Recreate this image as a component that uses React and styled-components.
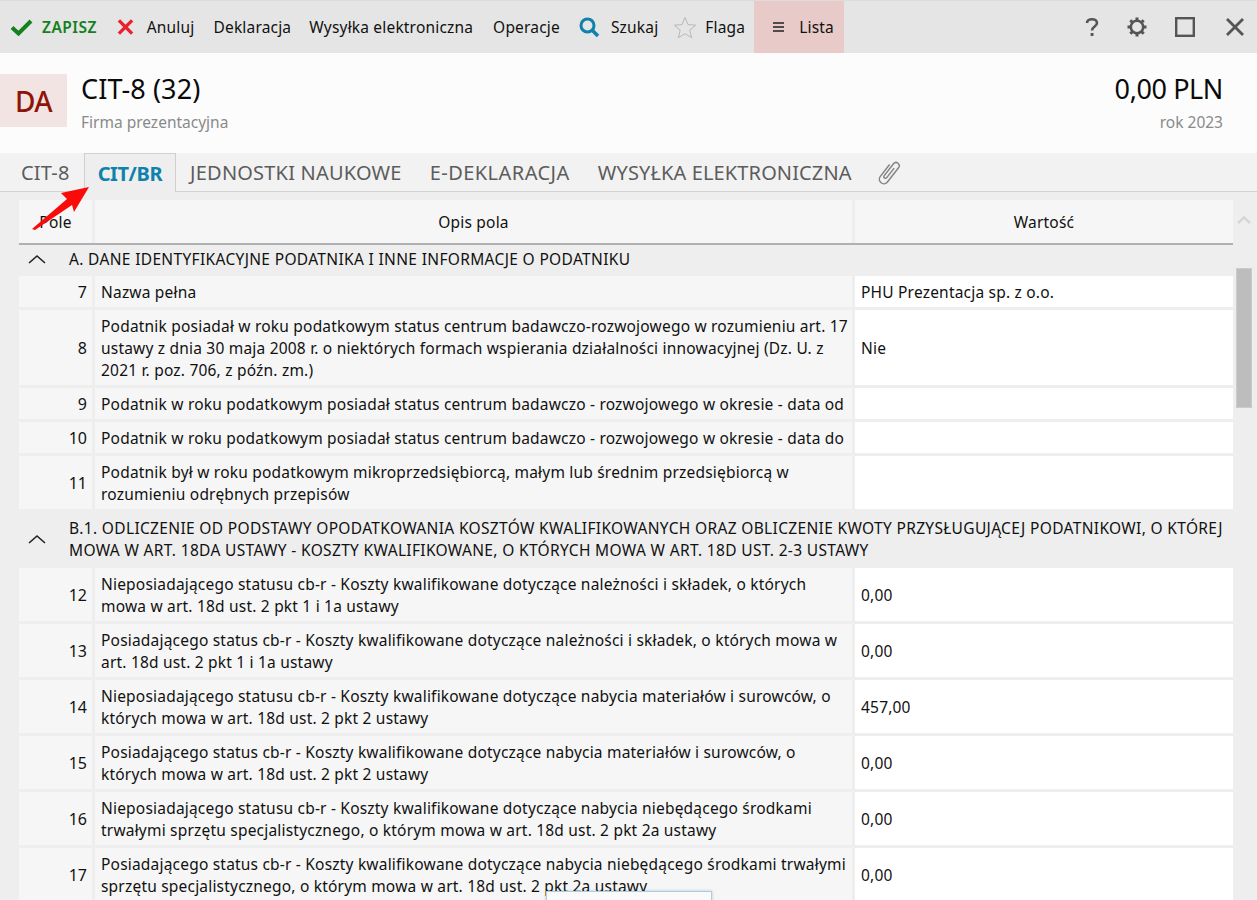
import React from 'react';
import styled, { createGlobalStyle } from 'styled-components';

const Global = createGlobalStyle`
    html, body { margin: 0; padding: 0; background: #eeeeee; }
    body { font-family: "Noto Sans", "Open Sans", "Liberation Sans", sans-serif; color: #111; }
`;

const Page = styled.div`
    position: relative;
    width: 1257px;
    height: 900px;
    overflow: hidden;
    display: flex;
    flex-direction: column;
    background: #eeeeee;
`;

const Toolbar = styled.div`
    height: 53px;
    flex: none;
    box-sizing: border-box;
    border-top: 1px solid #dcdcdc;
    background: #e5e5e5;
    display: flex;
    align-items: stretch;
    padding-left: 10px;
    font-size: 15.5px;
    letter-spacing: 0.18px;
`;

const ToolItem = styled.div`
    display: flex;
    align-items: center;
    gap: ${props => props.$gap || 0}px;
    margin-right: ${props => props.$mr || 0}px;
    color: ${props => props.$color || '#111'};
    font-weight: ${props => props.$bold ? 600 : 400};
    letter-spacing: ${props => props.$bold ? '0.45px' : 'inherit'};
    white-space: nowrap;
    flex: none;
`;

const ListaItem = styled(ToolItem)`
    background: #e8cbc8;
    width: 90px;
    box-sizing: border-box;
    padding-left: 19px;
    gap: 15px;
`;

const WindowButtons = styled.div`
    margin-left: auto;
    display: flex;
    align-items: center;
    padding-right: 12px;
`;

const Header = styled.div`
    height: 100px;
    flex: none;
    background: #fcfcfc;
    display: flex;
    align-items: flex-start;
    padding-top: 21px;
    box-sizing: border-box;
`;

const Badge = styled.div`
    width: 67px;
    height: 53px;
    background: #f2e4e2;
    color: #8f1408;
    font-size: 28px;
    font-weight: 500;
    display: flex;
    align-items: center;
    justify-content: center;
    letter-spacing: -0.5px;
    flex: none;
`;

const TitleBlock = styled.div`
    margin-left: 14px;
    flex: 1;
    margin-top: -2px;
`;

const Title = styled.div`
    font-size: 27px;
    line-height: 34px;
    letter-spacing: ${props => props.$ls || '0.1px'};
    color: #0a0a0a;
`;

const Sub = styled.div`
    font-size: 15.5px;
    line-height: 24px;
    margin-top: 4px;
    color: #8a8a8a;
`;

const Amount = styled.div`
    text-align: right;
    padding-right: 34px;
    margin-top: -2px;
`;

const Tabs = styled.div`
    height: 39px;
    flex: none;
    box-sizing: border-box;
    background: #f2f2f2;
    border-bottom: 1px solid #d2d2d2;
    display: flex;
    align-items: stretch;
    padding-left: 7px;
    font-size: 20px;
    color: #5c5c5c;
`;

const Tab = styled.div`
    display: flex;
    align-items: center;
    padding: 0 14px;
    white-space: nowrap;
    letter-spacing: ${props => props.$ls || '0.2px'};
    box-sizing: border-box;
    height: ${props => props.$active ? '39px' : '38px'};
    ${props => props.$active && `
        background: #eeeeee;
        color: #0e81ad;
        font-weight: 700;
        border: 1px solid #cfcfcf;
        border-bottom: none;
        padding: 0 13px;
        letter-spacing: -0.4px;
    `}
`;

const Clip = styled.div`
    display: flex;
    align-items: center;
    margin-left: 11px;
`;

const Body = styled.div`
    flex: 1;
    display: flex;
    min-height: 0;
    padding-left: 19px;
    padding-top: 8px;
`;

const Table = styled.div`
    width: 1214px;
    flex: none;
    font-size: 15.5px;
    letter-spacing: 0.2px;
`;

const HeadRow = styled.div`
    display: grid;
    grid-template-columns: 73px 757px 378px;
    column-gap: 3px;
    height: 45px;
    border-bottom: 2px solid #b0b0b0;
    box-sizing: border-box;
`;

const HeadCell = styled.div`
    background: #f6f6f6;
    display: flex;
    align-items: center;
    justify-content: center;
    height: 43px;
`;

const Section = styled.div`
    display: flex;
    align-items: center;
    box-sizing: border-box;
    height: ${props => props.$h}px;
    padding-bottom: ${props => props.$pb || 0}px;
    line-height: 22px;
    background: #eeeeee;
`;

const Chevron = styled.div`
    width: 50px;
    flex: none;
    display: flex;
    justify-content: center;
    padding-right: 14px;
    box-sizing: border-box;
`;

const SectionText = styled.div`
    white-space: nowrap;
    letter-spacing: 0.34px;
`;

const Row = styled.div`
    display: grid;
    grid-template-columns: 73px 757px 378px;
    column-gap: 3px;
    height: ${props => props.$h}px;
    margin-bottom: ${props => props.$last ? 0 : 3}px;
    line-height: 22px;
`;

const NoCell = styled.div`
    background: #f6f6f6;
    display: flex;
    align-items: center;
    justify-content: flex-end;
    padding-right: 5px;
    font-size: 16px;
    letter-spacing: 0;
`;

const LabelCell = styled.div`
    background: #f6f6f6;
    display: flex;
    flex-direction: column;
    justify-content: center;
    padding-left: 6px;
    white-space: nowrap;
`;

const ValueCell = styled.div`
    background: #ffffff;
    display: flex;
    align-items: center;
    padding-left: 6px;
`;

const Scrollbar = styled.div`
    width: 18px;
    margin-left: 2px;
    flex: none;
    display: flex;
    flex-direction: column;
    align-items: center;
`;

const ScrollArrow = styled.div`
    height: 68px;
    flex: none;
    padding-top: 8px;
    box-sizing: border-box;
`;

const ScrollThumb = styled.div`
    width: 16px;
    height: 140px;
    box-sizing: border-box;
    background: #bdbdbd;
    border: 1px solid #cbcbcb;
    flex: none;
`;

const RedArrow = styled.svg`
    position: absolute;
    left: 28px;
    top: 180px;
`;

const Popup = styled.div`
    position: absolute;
    left: 546px;
    top: 891px;
    width: 166px;
    height: 20px;
    box-sizing: border-box;
    background: #fafafa;
    border: 1px solid #a9cfe8;
    box-shadow: 0 0 3px rgba(0, 0, 0, 0.2);
`;

const rows = [
    { no: 7, h: 31, lines: ['Nazwa pełna'], value: 'PHU Prezentacja sp. z o.o.' },
    { no: 8, h: 75, lines: ['Podatnik posiadał w roku podatkowym status centrum badawczo-rozwojowego w rozumieniu art. 17', 'ustawy z dnia 30 maja 2008 r. o niektórych formach wspierania działalności innowacyjnej (Dz. U. z', '2021 r. poz. 706, z późn. zm.)'], value: 'Nie' },
    { no: 9, h: 31, lines: ['Podatnik w roku podatkowym posiadał status centrum badawczo - rozwojowego w okresie - data od'] },
    { no: 10, h: 31, lines: ['Podatnik w roku podatkowym posiadał status centrum badawczo - rozwojowego w okresie - data do'] },
    { no: 11, h: 53, lines: ['Podatnik był w roku podatkowym mikroprzedsiębiorcą, małym lub średnim przedsiębiorcą w', 'rozumieniu odrębnych przepisów'], last: true },
];

const rowsB = [
    { no: 12, lines: ['Nieposiadającego statusu cb-r - Koszty kwalifikowane dotyczące należności i składek, o których', 'mowa w art. 18d ust. 2 pkt 1 i 1a ustawy'], value: '0,00' },
    { no: 13, lines: ['Posiadającego status cb-r - Koszty kwalifikowane dotyczące należności i składek, o których mowa w', 'art. 18d ust. 2 pkt 1 i 1a ustawy'], value: '0,00' },
    { no: 14, lines: ['Nieposiadającego statusu cb-r - Koszty kwalifikowane dotyczące nabycia materiałów i surowców, o', 'których mowa w art. 18d ust. 2 pkt 2 ustawy'], value: '457,00' },
    { no: 15, lines: ['Posiadającego status cb-r - Koszty kwalifikowane dotyczące nabycia materiałów i surowców, o', 'których mowa w art. 18d ust. 2 pkt 2 ustawy'], value: '0,00' },
    { no: 16, lines: ['Nieposiadającego statusu cb-r - Koszty kwalifikowane dotyczące nabycia niebędącego środkami', 'trwałymi sprzętu specjalistycznego, o którym mowa w art. 18d ust. 2 pkt 2a ustawy'], value: '0,00' },
    { no: 17, lines: ['Posiadającego status cb-r - Koszty kwalifikowane dotyczące nabycia niebędącego środkami trwałymi', 'sprzętu specjalistycznego, o którym mowa w art. 18d ust. 2 pkt 2a ustawy'], value: '0,00' },
];

const ChevronUp = () => (
    <svg width="18" height="10" viewBox="0 0 18 10"><path d="M1 9 L9 2 L17 9" fill="none" stroke="#222" strokeWidth="1.6" /></svg>
);

const TableRow = ({ row, height }) => (
    <Row $h={row.h || height} $last={row.last}>
        <NoCell>{row.no}</NoCell>
        <LabelCell>{row.lines.map(line => <div key={line}>{line}</div>)}</LabelCell>
        <ValueCell>{row.value}</ValueCell>
    </Row>
);

const App = () => (
    <Page>
        <Global />
        <Toolbar>
            <ToolItem $color="#14801e" $bold $gap={9} $mr={20}>
                <svg width="23" height="18" viewBox="0 0 23 18"><path d="M2 9.5 L8.5 15.5 L21 3" fill="none" stroke="#14801e" strokeWidth="4" /></svg>
                ZAPISZ
            </ToolItem>
            <ToolItem $gap={13} $mr={19}>
                <svg width="17" height="18" viewBox="0 0 18 18"><path d="M2 2 L16 16 M16 2 L2 16" stroke="#e8222e" strokeWidth="3.6" /></svg>
                Anuluj
            </ToolItem>
            <ToolItem $mr={18}>Deklaracja</ToolItem>
            <ToolItem $mr={20}>Wysyłka elektroniczna</ToolItem>
            <ToolItem $mr={19}>Operacje</ToolItem>
            <ToolItem $gap={11} $mr={15}>
                <svg width="21" height="21" viewBox="0 0 21 21"><circle cx="8.5" cy="8.5" r="6.5" fill="none" stroke="#0e81ad" strokeWidth="3" /><path d="M13 13 L19 19" stroke="#0e81ad" strokeWidth="3.6" /></svg>
                Szukaj
            </ToolItem>
            <ToolItem $gap={8} $mr={9}>
                <svg width="24" height="23" viewBox="0 0 24 23"><path d="M12 1.5 L15 8.6 L22.7 9.2 L16.8 14.2 L18.6 21.7 L12 17.7 L5.4 21.7 L7.2 14.2 L1.3 9.2 L9 8.6 Z" fill="none" stroke="#b8b8b8" strokeWidth="1" /></svg>
                Flaga
            </ToolItem>
            <ListaItem>
                <svg width="11" height="10" viewBox="0 0 11 10"><path d="M0 1 H11 M0 5 H11 M0 9 H11" stroke="#222" strokeWidth="1.4" /></svg>
                Lista
            </ListaItem>
            <WindowButtons>
                <ToolItem $mr={26}>
                    <svg width="16" height="22" viewBox="0 0 16 22"><path d="M3 7 C3 2 13 2 13 7 C13 10.5 8 10.5 8 14.5" fill="none" stroke="#555" strokeWidth="2.6" /><rect x="6.6" y="17" width="2.9" height="3" fill="#555" /></svg>
                </ToolItem>
                <ToolItem $mr={27}>
                    <svg width="22" height="22" viewBox="0 0 22 22">
                        <circle cx="11" cy="11" r="6.2" fill="none" stroke="#555" strokeWidth="2.6" />
                        <path d="M11 1.5 V5 M11 17 V20.5 M1.5 11 H5 M17 11 H20.5 M4.3 4.3 L6.8 6.8 M15.2 15.2 L17.7 17.7 M17.7 4.3 L15.2 6.8 M6.8 15.2 L4.3 17.7" stroke="#555" strokeWidth="3" />
                    </svg>
                </ToolItem>
                <ToolItem $mr={30}>
                    <svg width="20" height="20" viewBox="0 0 20 20"><rect x="1.2" y="1.2" width="17.6" height="17.6" fill="none" stroke="#555" strokeWidth="2.4" /></svg>
                </ToolItem>
                <svg width="20" height="20" viewBox="0 0 20 20"><path d="M2 2 L18 18 M18 2 L2 18" stroke="#555" strokeWidth="2.8" /></svg>
            </WindowButtons>
        </Toolbar>
        <Header>
            <Badge>DA</Badge>
            <TitleBlock>
                <Title>CIT-8 (32)</Title>
                <Sub>Firma prezentacyjna</Sub>
            </TitleBlock>
            <Amount>
                <Title $ls="-0.4px">0,00 PLN</Title>
                <Sub>rok 2023</Sub>
            </Amount>
        </Header>
        <Tabs>
            <Tab>CIT-8</Tab>
            <Tab $active>CIT/BR</Tab>
            <Tab>JEDNOSTKI NAUKOWE</Tab>
            <Tab $ls="0.45px">E-DEKLARACJA</Tab>
            <Tab $ls="0.12px">WYSYŁKA ELEKTRONICZNA</Tab>
            <Clip>
                <svg width="24" height="28" viewBox="0 0 24 28">
                    <path d="M3 8 V23 a4.5 4.5 0 0 0 9 0 V5 a3.2 3.2 0 0 0 -6.4 0 V20 a1.6 1.6 0 0 0 3.2 0 V8" fill="none" stroke="#858585" strokeWidth="1.5" transform="translate(1 -3) rotate(38 7.5 14) translate(5 0)" />
                </svg>
            </Clip>
        </Tabs>
        <Body>
            <Table>
                <HeadRow>
                    <HeadCell>Pole</HeadCell>
                    <HeadCell>Opis pola</HeadCell>
                    <HeadCell>Wartość</HeadCell>
                </HeadRow>
                <Section $h={31} $pb={4}>
                    <Chevron><ChevronUp /></Chevron>
                    <SectionText>A. DANE IDENTYFIKACYJNE PODATNIKA I INNE INFORMACJE O PODATNIKU</SectionText>
                </Section>
                {rows.map(row => <TableRow key={row.no} row={row} />)}
                <Section $h={59}>
                    <Chevron><ChevronUp /></Chevron>
                    <SectionText>
                        <div>B.1. ODLICZENIE OD PODSTAWY OPODATKOWANIA KOSZTÓW KWALIFIKOWANYCH ORAZ OBLICZENIE KWOTY PRZYSŁUGUJĄCEJ PODATNIKOWI, O KTÓREJ</div>
                        <div>MOWA W ART. 18DA USTAWY - KOSZTY KWALIFIKOWANE, O KTÓRYCH MOWA W ART. 18D UST. 2-3 USTAWY</div>
                    </SectionText>
                </Section>
                {rowsB.map(row => <TableRow key={row.no} row={row} height={53} />)}
            </Table>
            <Scrollbar>
                <ScrollArrow>
                    <svg width="16" height="10" viewBox="0 0 16 10"><path d="M2 8 L8 2.5 L14 8" fill="none" stroke="#d6d6d6" strokeWidth="2.4" /></svg>
                </ScrollArrow>
                <ScrollThumb />
            </Scrollbar>
        </Body>
        <RedArrow width="66" height="56" viewBox="0 0 66 56">
            <path d="M4 49 L39 19 L33 13 L61 7 L46 32 L44 25 L7 50 Z" fill="#fb0a0a" />
        </RedArrow>
        <Popup />
    </Page>
);

export default App;
